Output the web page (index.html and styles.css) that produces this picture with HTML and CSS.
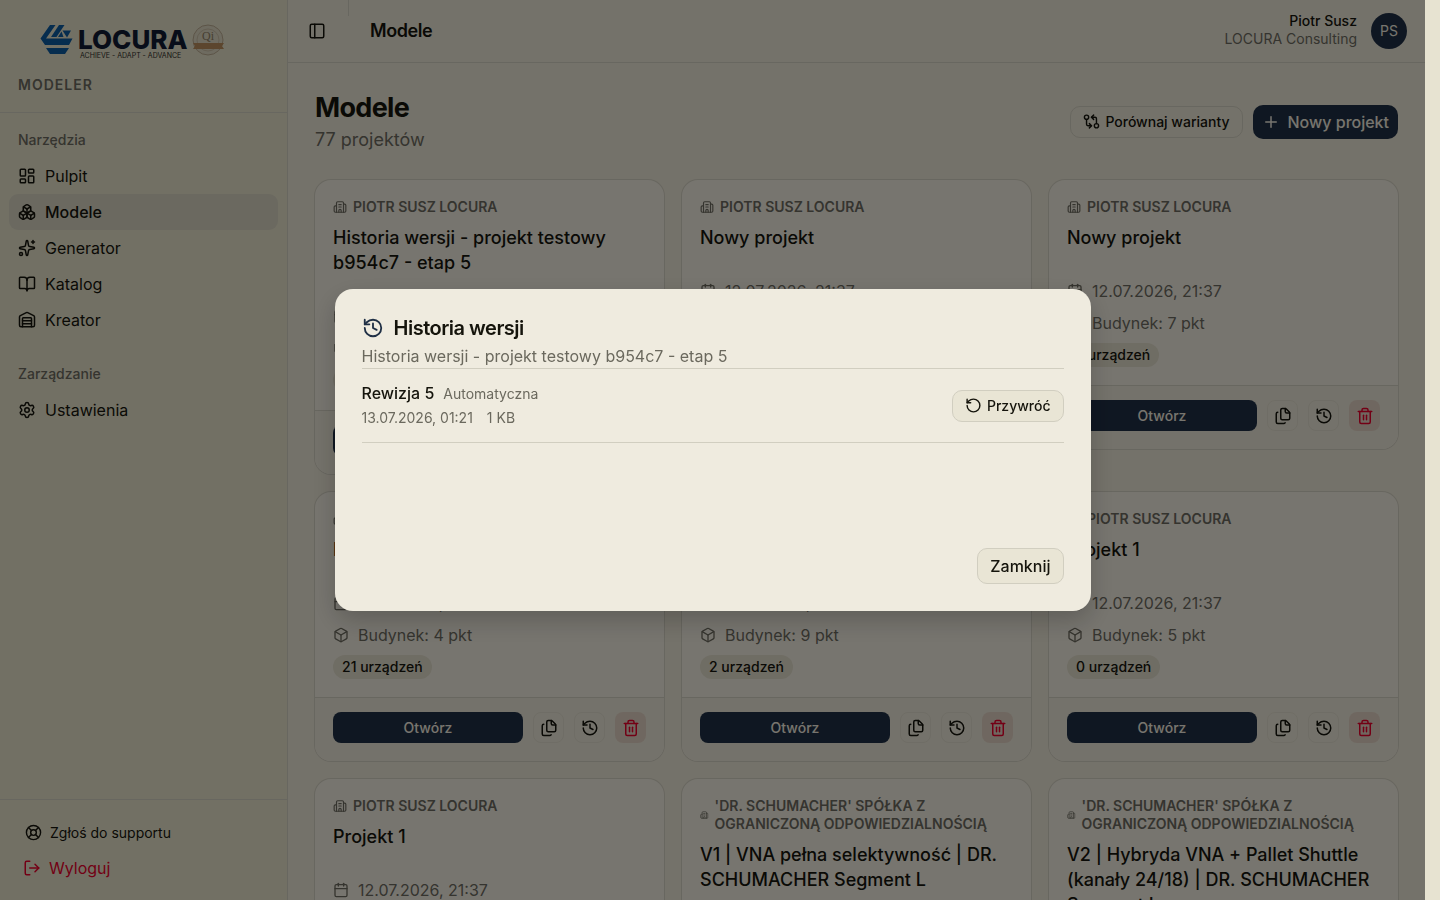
FILE: index.html
```html
<!DOCTYPE html>
<html lang="pl">
<head>
    <meta charset="UTF-8">
    <meta name="viewport" content="width=device-width, initial-scale=1.0">
    <title>Modele - LOCURA Modeler</title>
    <link rel="stylesheet" href="styles.css">
</head>
<body>
    <!-- Icon set -->
    <svg class="sprite" aria-hidden="true">
        <symbol id="i-dashboard" viewBox="0 0 24 24"><rect width="7" height="9" x="3" y="3" rx="1"/><rect width="7" height="5" x="14" y="3" rx="1"/><rect width="7" height="9" x="14" y="12" rx="1"/><rect width="7" height="5" x="3" y="16" rx="1"/></symbol>
        <symbol id="i-boxes" viewBox="0 0 24 24"><path d="M2.97 12.92A2 2 0 0 0 2 14.63v3.24a2 2 0 0 0 .97 1.71l3 1.8a2 2 0 0 0 2.06 0L12 19v-5.5l-5-3-4.03 2.42Z"/><path d="m7 16.5-4.74-2.85"/><path d="m7 16.5 5-3"/><path d="M7 16.5v5.17"/><path d="M12 13.5V19l3.97 2.38a2 2 0 0 0 2.06 0l3-1.8a2 2 0 0 0 .97-1.71v-3.24a2 2 0 0 0-.97-1.71L17 10.5l-5 3Z"/><path d="m17 16.5-5-3"/><path d="m17 16.5 4.74-2.85"/><path d="M17 16.5v5.17"/><path d="M7.97 4.42A2 2 0 0 0 7 6.13v4.37l5 3 5-3V6.13a2 2 0 0 0-.97-1.71l-3-1.8a2 2 0 0 0-2.06 0l-3 1.8Z"/><path d="M12 8 7.26 5.15"/><path d="m12 8 4.74-2.85"/><path d="M12 13.5V8"/></symbol>
        <symbol id="i-sparkles" viewBox="0 0 24 24"><path d="M11.017 2.814a1 1 0 0 1 1.966 0l1.051 5.558a2 2 0 0 0 1.594 1.594l5.558 1.051a1 1 0 0 1 0 1.966l-5.558 1.051a2 2 0 0 0-1.594 1.594l-1.051 5.558a1 1 0 0 1-1.966 0l-1.051-5.558a2 2 0 0 0-1.594-1.594l-5.558-1.051a1 1 0 0 1 0-1.966l5.558-1.051a2 2 0 0 0 1.594-1.594z"/><path d="M20 2v4"/><path d="M22 4h-4"/><circle cx="4" cy="20" r="2"/></symbol>
        <symbol id="i-book" viewBox="0 0 24 24"><path d="M12 7v14"/><path d="M3 18a1 1 0 0 1-1-1V4a1 1 0 0 1 1-1h5a4 4 0 0 1 4 4 4 4 0 0 1 4-4h5a1 1 0 0 1 1 1v13a1 1 0 0 1-1 1h-6a3 3 0 0 0-3 3 3 3 0 0 0-3-3z"/></symbol>
        <symbol id="i-warehouse" viewBox="0 0 24 24"><path d="M18 21V10a1 1 0 0 0-1-1H7a1 1 0 0 0-1 1v11"/><path d="M22 19a2 2 0 0 1-2 2H4a2 2 0 0 1-2-2V8a2 2 0 0 1 1.132-1.803l7.95-3.974a2 2 0 0 1 1.837 0l7.948 3.974A2 2 0 0 1 22 8z"/><path d="M6 13h12"/><path d="M6 17h12"/></symbol>
        <symbol id="i-settings" viewBox="0 0 24 24"><path d="M9.671 4.136a2.34 2.34 0 0 1 4.659 0 2.34 2.34 0 0 0 3.319 1.915 2.34 2.34 0 0 1 2.33 4.033 2.34 2.34 0 0 0 0 3.831 2.34 2.34 0 0 1-2.33 4.033 2.34 2.34 0 0 0-3.319 1.915 2.34 2.34 0 0 1-4.659 0 2.34 2.34 0 0 0-3.32-1.915 2.34 2.34 0 0 1-2.33-4.033 2.34 2.34 0 0 0 0-3.831A2.34 2.34 0 0 1 6.35 6.051a2.34 2.34 0 0 0 3.319-1.915"/><circle cx="12" cy="12" r="3"/></symbol>
        <symbol id="i-support" viewBox="0 0 24 24"><circle cx="12" cy="12" r="10"/><path d="m4.93 4.93 4.24 4.24"/><path d="m14.83 9.17 4.24-4.24"/><path d="m14.83 14.83 4.24 4.24"/><path d="m9.17 14.83-4.24 4.24"/><circle cx="12" cy="12" r="4"/></symbol>
        <symbol id="i-logout" viewBox="0 0 24 24"><path d="m16 17 5-5-5-5"/><path d="M21 12H9"/><path d="M9 21H5a2 2 0 0 1-2-2V5a2 2 0 0 1 2-2h4"/></symbol>
        <symbol id="i-panel" viewBox="0 0 24 24"><rect width="18" height="18" x="3" y="3" rx="2"/><path d="M9 3v18"/></symbol>
        <symbol id="i-compare" viewBox="0 0 24 24"><circle cx="5" cy="6" r="3"/><path d="M12 6h5a2 2 0 0 1 2 2v7"/><path d="m15 9-3-3 3-3"/><circle cx="19" cy="18" r="3"/><path d="M12 18H7a2 2 0 0 1-2-2V9"/><path d="m9 15 3 3-3 3"/></symbol>
        <symbol id="i-plus" viewBox="0 0 24 24"><path d="M5 12h14"/><path d="M12 5v14"/></symbol>
        <symbol id="i-building" viewBox="0 0 24 24"><path d="M10 12h4"/><path d="M10 8h4"/><path d="M14 21v-3a2 2 0 0 0-4 0v3"/><path d="M6 10H4a2 2 0 0 0-2 2v7a2 2 0 0 0 2 2h16a2 2 0 0 0 2-2V9a2 2 0 0 0-2-2h-2"/><path d="M6 21V5a2 2 0 0 1 2-2h8a2 2 0 0 1 2 2v16"/></symbol>
        <symbol id="i-calendar" viewBox="0 0 24 24"><path d="M8 2v4"/><path d="M16 2v4"/><rect width="18" height="18" x="3" y="4" rx="2"/><path d="M3 10h18"/></symbol>
        <symbol id="i-box" viewBox="0 0 24 24"><path d="M21 8a2 2 0 0 0-1-1.73l-7-4a2 2 0 0 0-2 0l-7 4A2 2 0 0 0 3 8v8a2 2 0 0 0 1 1.73l7 4a2 2 0 0 0 2 0l7-4A2 2 0 0 0 21 16Z"/><path d="m3.3 7 8.7 5 8.7-5"/><path d="M12 22V12"/></symbol>
        <symbol id="i-files" viewBox="0 0 24 24"><path d="M15 2a2 2 0 0 1 1.414.586l4 4A2 2 0 0 1 21 8v7a2 2 0 0 1-2 2h-8a2 2 0 0 1-2-2V4a2 2 0 0 1 2-2z"/><path d="M15 2v4a2 2 0 0 0 2 2h4"/><path d="M5 7a2 2 0 0 0-2 2v11a2 2 0 0 0 2 2h8a2 2 0 0 0 1.732-1"/></symbol>
        <symbol id="i-history" viewBox="0 0 24 24"><path d="M3 12a9 9 0 1 0 9-9 9.75 9.75 0 0 0-6.74 2.74L3 8"/><path d="M3 3v5h5"/><path d="M12 7v5l4 2"/></symbol>
        <symbol id="i-trash" viewBox="0 0 24 24"><path d="M10 11v6"/><path d="M14 11v6"/><path d="M19 6v14a2 2 0 0 1-2 2H7a2 2 0 0 1-2-2V6"/><path d="M3 6h18"/><path d="M8 6V4a2 2 0 0 1 2-2h4a2 2 0 0 1 2 2v2"/></symbol>
        <symbol id="i-restore" viewBox="0 0 24 24"><path d="M3 12a9 9 0 1 0 9-9 9.75 9.75 0 0 0-6.74 2.74L3 8"/><path d="M3 3v5h5"/></symbol>
    </svg>

    <div class="app">
        <aside class="sidebar">
            <div class="sidebar-header">
                <svg class="logo" width="188" height="40" viewBox="0 0 188 40" role="img" aria-label="LOCURA">
                    <g fill="#0d5a9e">
                        <path d="M13 3h5.500L9 16.500h26.500L32 23H8L3.500 16.500z"/>
                        <path d="M22 3h5.500l-8 12H14z"/>
                        <path d="M24.500 9.500l2 5.500h-5.500z"/>
                        <path d="M25.500 8.500H34L30 15.500z"/>
                        <path d="M9 26h23l-4 6H13z"/>
                    </g>
                    <text class="logo-name" x="41" y="27">LOCURA</text>
                    <text class="logo-tag" x="43" y="36">ACHIEVE - ADAPT - ADVANCE</text>
                    <circle cx="171" cy="18" r="15" fill="#dcd6c0" stroke="#b9a98f"/>
                    <circle cx="171" cy="18" r="11" fill="none" stroke="#c8bca4"/>
                    <text class="logo-seal" x="171" y="18">Qi</text>
                    <path d="M156 21h31l-2 3 2 3h-31l2-3z" fill="#b98d5c"/>
                </svg>
                <span class="product">MODELER</span>
            </div>

            <nav class="nav">
                <div class="nav-group">
                    <div class="nav-label">Narzędzia</div>
                    <a class="nav-item" href="#"><svg class="icon"><use href="#i-dashboard"/></svg>Pulpit</a>
                    <a class="nav-item active" href="#"><svg class="icon"><use href="#i-boxes"/></svg>Modele</a>
                    <a class="nav-item" href="#"><svg class="icon"><use href="#i-sparkles"/></svg>Generator</a>
                    <a class="nav-item" href="#"><svg class="icon"><use href="#i-book"/></svg>Katalog</a>
                    <a class="nav-item" href="#"><svg class="icon"><use href="#i-warehouse"/></svg>Kreator</a>
                </div>
                <div class="nav-group">
                    <div class="nav-label">Zarządzanie</div>
                    <a class="nav-item" href="#"><svg class="icon"><use href="#i-settings"/></svg>Ustawienia</a>
                </div>
            </nav>

            <div class="sidebar-footer">
                <button class="support" type="button"><svg class="icon"><use href="#i-support"/></svg>Zgłoś do supportu</button>
                <button class="logout" type="button"><svg class="icon"><use href="#i-logout"/></svg>Wyloguj</button>
            </div>
        </aside>

        <div class="main">
            <header class="topbar">
                <button class="toggle" type="button" aria-label="Przełącz panel"><svg class="icon"><use href="#i-panel"/></svg></button>
                <span class="divider"></span>
                <span class="topbar-title">Modele</span>
                <div class="user">
                    <span class="user-name">Piotr Susz</span>
                    <span class="user-org">LOCURA Consulting</span>
                </div>
                <span class="avatar">PS</span>
            </header>

            <main class="content">
                <div class="page-head">
                    <div>
                        <h1>Modele</h1>
                        <p class="count">77 projektów</p>
                    </div>
                    <div class="actions">
                        <button class="btn btn-small" type="button"><svg class="icon"><use href="#i-compare"/></svg>Porównaj warianty</button>
                        <button class="btn btn-primary" type="button"><svg class="icon"><use href="#i-plus"/></svg>Nowy projekt</button>
                    </div>
                </div>

                <div class="grid">
                    <article class="card">
                        <div class="card-body">
                            <div class="client"><svg class="icon"><use href="#i-building"/></svg><span>PIOTR SUSZ LOCURA</span></div>
                            <h2>Historia wersji - projekt testowy b954c7 - etap 5</h2>
                            <div class="meta"><svg class="icon"><use href="#i-calendar"/></svg>13.07.2026, 01:21</div>
                            <div class="meta"><svg class="icon"><use href="#i-box"/></svg>Budynek: 4 pkt</div>
                            <span class="pill">0 urządzeń</span>
                        </div>
                        <div class="card-footer">
                            <button class="open" type="button">Otwórz</button>
                            <button class="tool" type="button" aria-label="Duplikuj"><svg class="icon"><use href="#i-files"/></svg></button>
                            <button class="tool" type="button" aria-label="Historia"><svg class="icon"><use href="#i-history"/></svg></button>
                            <button class="tool danger" type="button" aria-label="Usuń"><svg class="icon"><use href="#i-trash"/></svg></button>
                        </div>
                    </article>
                    <article class="card">
                        <div class="card-body">
                            <div class="client"><svg class="icon"><use href="#i-building"/></svg><span>PIOTR SUSZ LOCURA</span></div>
                            <h2>Nowy projekt</h2>
                            <div class="meta"><svg class="icon"><use href="#i-calendar"/></svg>12.07.2026, 21:37</div>
                            <div class="meta"><svg class="icon"><use href="#i-box"/></svg>Budynek: 4 pkt</div>
                            <span class="pill">0 urządzeń</span>
                        </div>
                        <div class="card-footer">
                            <button class="open" type="button">Otwórz</button>
                            <button class="tool" type="button" aria-label="Duplikuj"><svg class="icon"><use href="#i-files"/></svg></button>
                            <button class="tool" type="button" aria-label="Historia"><svg class="icon"><use href="#i-history"/></svg></button>
                            <button class="tool danger" type="button" aria-label="Usuń"><svg class="icon"><use href="#i-trash"/></svg></button>
                        </div>
                    </article>
                    <article class="card">
                        <div class="card-body">
                            <div class="client"><svg class="icon"><use href="#i-building"/></svg><span>PIOTR SUSZ LOCURA</span></div>
                            <h2>Nowy projekt</h2>
                            <div class="meta"><svg class="icon"><use href="#i-calendar"/></svg>12.07.2026, 21:37</div>
                            <div class="meta"><svg class="icon"><use href="#i-box"/></svg>Budynek: 7 pkt</div>
                            <span class="pill">7 urządzeń</span>
                        </div>
                        <div class="card-footer">
                            <button class="open" type="button">Otwórz</button>
                            <button class="tool" type="button" aria-label="Duplikuj"><svg class="icon"><use href="#i-files"/></svg></button>
                            <button class="tool" type="button" aria-label="Historia"><svg class="icon"><use href="#i-history"/></svg></button>
                            <button class="tool danger" type="button" aria-label="Usuń"><svg class="icon"><use href="#i-trash"/></svg></button>
                        </div>
                    </article>

                    <article class="card">
                        <div class="card-body">
                            <div class="client"><svg class="icon"><use href="#i-building"/></svg><span>PIOTR SUSZ LOCURA</span></div>
                            <h2>Projekt 1</h2>
                            <div class="meta"><svg class="icon"><use href="#i-calendar"/></svg>12.07.2026, 21:37</div>
                            <div class="meta"><svg class="icon"><use href="#i-box"/></svg>Budynek: 4 pkt</div>
                            <span class="pill">21 urządzeń</span>
                        </div>
                        <div class="card-footer">
                            <button class="open" type="button">Otwórz</button>
                            <button class="tool" type="button" aria-label="Duplikuj"><svg class="icon"><use href="#i-files"/></svg></button>
                            <button class="tool" type="button" aria-label="Historia"><svg class="icon"><use href="#i-history"/></svg></button>
                            <button class="tool danger" type="button" aria-label="Usuń"><svg class="icon"><use href="#i-trash"/></svg></button>
                        </div>
                    </article>
                    <article class="card">
                        <div class="card-body">
                            <div class="client"><svg class="icon"><use href="#i-building"/></svg><span>PIOTR SUSZ LOCURA</span></div>
                            <h2>Projekt 1</h2>
                            <div class="meta"><svg class="icon"><use href="#i-calendar"/></svg>12.07.2026, 21:37</div>
                            <div class="meta"><svg class="icon"><use href="#i-box"/></svg>Budynek: 9 pkt</div>
                            <span class="pill">2 urządzeń</span>
                        </div>
                        <div class="card-footer">
                            <button class="open" type="button">Otwórz</button>
                            <button class="tool" type="button" aria-label="Duplikuj"><svg class="icon"><use href="#i-files"/></svg></button>
                            <button class="tool" type="button" aria-label="Historia"><svg class="icon"><use href="#i-history"/></svg></button>
                            <button class="tool danger" type="button" aria-label="Usuń"><svg class="icon"><use href="#i-trash"/></svg></button>
                        </div>
                    </article>
                    <article class="card">
                        <div class="card-body">
                            <div class="client"><svg class="icon"><use href="#i-building"/></svg><span>PIOTR SUSZ LOCURA</span></div>
                            <h2>Projekt 1</h2>
                            <div class="meta"><svg class="icon"><use href="#i-calendar"/></svg>12.07.2026, 21:37</div>
                            <div class="meta"><svg class="icon"><use href="#i-box"/></svg>Budynek: 5 pkt</div>
                            <span class="pill">0 urządzeń</span>
                        </div>
                        <div class="card-footer">
                            <button class="open" type="button">Otwórz</button>
                            <button class="tool" type="button" aria-label="Duplikuj"><svg class="icon"><use href="#i-files"/></svg></button>
                            <button class="tool" type="button" aria-label="Historia"><svg class="icon"><use href="#i-history"/></svg></button>
                            <button class="tool danger" type="button" aria-label="Usuń"><svg class="icon"><use href="#i-trash"/></svg></button>
                        </div>
                    </article>

                    <article class="card">
                        <div class="card-body">
                            <div class="client"><svg class="icon"><use href="#i-building"/></svg><span>PIOTR SUSZ LOCURA</span></div>
                            <h2>Projekt 1</h2>
                            <div class="meta"><svg class="icon"><use href="#i-calendar"/></svg>12.07.2026, 21:37</div>
                        </div>
                    </article>
                    <article class="card">
                        <div class="card-body">
                            <div class="client"><svg class="icon"><use href="#i-building"/></svg><span>'DR. SCHUMACHER' SPÓŁKA Z OGRANICZONĄ ODPOWIEDZIALNOŚCIĄ</span></div>
                            <h2>V1 | VNA pełna selektywność | DR. SCHUMACHER Segment L</h2>
                        </div>
                    </article>
                    <article class="card">
                        <div class="card-body">
                            <div class="client"><svg class="icon"><use href="#i-building"/></svg><span>'DR. SCHUMACHER' SPÓŁKA Z OGRANICZONĄ ODPOWIEDZIALNOŚCIĄ</span></div>
                            <h2>V2 | Hybryda VNA + Pallet Shuttle (kanały 24/18) | DR. SCHUMACHER Segment L</h2>
                        </div>
                    </article>
                </div>
            </main>
        </div>
    </div>

    <div class="overlay">
        <div class="modal" role="dialog" aria-modal="true" aria-labelledby="modalTitle">
            <h2 class="modal-title" id="modalTitle"><svg class="icon"><use href="#i-history"/></svg>Historia wersji</h2>
            <p class="modal-sub">Historia wersji - projekt testowy b954c7 - etap 5</p>
            <ul class="revisions">
                <li>
                    <div>
                        <div class="rev-line"><strong>Rewizja 5</strong><span>Automatyczna</span></div>
                        <div class="rev-info"><span>13.07.2026, 01:21</span><span>1 KB</span></div>
                    </div>
                    <button class="btn btn-small" type="button"><svg class="icon"><use href="#i-restore"/></svg>Przywróć</button>
                </li>
            </ul>
            <div class="modal-footer">
                <button class="btn" type="button">Zamknij</button>
            </div>
        </div>
    </div>
</body>
</html>
```
FILE: styles.css
```css
* {
    margin: 0;
    padding: 0;
    box-sizing: border-box;
}

:root {
    --page: #e9e4d4;
    --sidebar: #e5e1c9;
    --card: #efebdf;
    --border: #d1cec0;
    --text: #15140c;
    --muted: #6b695e;
    --navy: #1f2f45;
    --red: #e6002a;
}

body {
    font-family: Inter, sans-serif;
    font-size: 16px;
    line-height: 24px;
    color: var(--text);
    background: #e7e3d1;
    height: 100vh;
    overflow: hidden;
    padding-right: 15px;
}

button {
    font: inherit;
    color: inherit;
    background: none;
    border: none;
    cursor: pointer;
}

a {
    color: inherit;
    text-decoration: none;
}

.sprite {
    display: none;
}

.icon {
    width: 18px;
    height: 18px;
    fill: none;
    stroke: currentColor;
    stroke-width: 2;
    stroke-linecap: round;
    stroke-linejoin: round;
}

.app {
    display: flex;
    height: 100vh;
    overflow: hidden;
}

/* Sidebar */
.sidebar {
    width: 288px;
    flex-shrink: 0;
    display: flex;
    flex-direction: column;
    background: var(--sidebar);
    border-right: 1px solid var(--border);
}

.sidebar-header {
    padding: 22px 18px 18px;
    border-bottom: 1px solid var(--border);
}

.logo {
    display: block;
    margin: 0 auto 14px 19px;
}

.logo-name {
    font-size: 26px;
    font-weight: 800;
    fill: #101a33;
}

.logo-tag {
    font-size: 7px;
    fill: #2e2d28;
}

.logo-seal {
    font-family: "Liberation Serif", serif;
    font-size: 12px;
    text-anchor: middle;
    fill: #8d7d63;
}

.product {
    display: block;
    font-size: 14px;
    font-weight: 600;
    line-height: 18px;
    letter-spacing: 1px;
    color: var(--muted);
}

.nav {
    flex: 1;
}

.nav-group {
    padding: 9px;
}

.nav-label {
    padding: 0 9px;
    font-size: 14px;
    font-weight: 500;
    line-height: 36px;
    color: var(--muted);
}

.nav-item {
    display: flex;
    align-items: center;
    gap: 9px;
    height: 36px;
    padding: 0 9px 1px;
    border-radius: 9px;
}

.nav-item.active {
    background: #d6d3c1;
    font-weight: 500;
}

.sidebar-footer {
    display: flex;
    flex-direction: column;
    align-items: flex-start;
    padding: 15px 18px;
    border-top: 1px solid var(--border);
}

.support,
.logout {
    display: flex;
    align-items: center;
    gap: 8px;
    height: 35px;
    padding: 0 7px;
}

.support {
    font-size: 14px;
}

.support .icon {
    width: 17px;
    height: 17px;
}

.logout {
    padding: 0 5px;
    color: var(--red);
}

/* Top bar */
.main {
    flex: 1;
    min-width: 0;
    background: var(--page);
}

.topbar {
    display: flex;
    align-items: center;
    height: 63px;
    padding: 0 18px;
    border-bottom: 1px solid var(--border);
}

.toggle {
    display: flex;
    padding: 2px;
}

.divider {
    align-self: flex-start;
    width: 1px;
    height: 16px;
    margin: 0 21px 0 20px;
    background: var(--border);
}

.topbar-title {
    flex: 1;
    font-size: 18px;
    font-weight: 600;
    letter-spacing: -0.025em;
}

.user {
    display: flex;
    flex-direction: column;
    margin-right: 14px;
    padding-bottom: 2px;
    font-size: 14px;
    line-height: 18px;
    text-align: right;
}

.user-name {
    font-weight: 500;
}

.user-org {
    color: var(--muted);
}

.avatar {
    width: 36px;
    border-radius: 50%;
    background: var(--navy);
    color: #efebdf;
    font-size: 14px;
    line-height: 36px;
    text-align: center;
}

/* Page */
.content {
    padding: 27px;
}

.page-head {
    display: flex;
    justify-content: space-between;
    align-items: center;
    margin-bottom: 27px;
}

h1 {
    font-size: 27px;
    font-weight: 700;
    line-height: 36px;
    letter-spacing: -0.025em;
}

.count {
    font-size: 18px;
    line-height: 27px;
    color: var(--muted);
}

.actions {
    display: flex;
    align-items: center;
    gap: 10px;
}

.btn {
    display: flex;
    align-items: center;
    gap: 8px;
    height: 36px;
    padding: 0 12px;
    border: 1px solid var(--border);
    border-radius: 10px;
    background: #e9e5d5;
    font-weight: 500;
}

.btn-small {
    gap: 5px;
    height: 32px;
    font-size: 14px;
}

.btn-small .icon {
    width: 17px;
    height: 17px;
}

.btn-primary {
    height: 34px;
    padding: 0 9px;
    border: none;
    background: var(--navy);
    color: #efebdf;
}

.grid {
    display: grid;
    grid-template-columns: repeat(3, 1fr);
    align-items: start;
    gap: 18px;
}

.card {
    overflow: hidden;
    border-radius: 16px;
    background: var(--card);
    box-shadow: 0 0 0 1px var(--border);
}

.card-body {
    padding: 18px;
}

.client {
    display: flex;
    align-items: center;
    gap: 6px;
    margin-bottom: 9px;
    font-size: 14px;
    font-weight: 600;
    line-height: 18px;
    color: var(--muted);
}

.client .icon {
    width: 14px;
    height: 14px;
}

.card h2 {
    margin-bottom: 29px;
    font-size: 18px;
    font-weight: 500;
    line-height: 25px;
}

.meta {
    display: flex;
    align-items: center;
    gap: 9px;
    margin-bottom: 8px;
    color: var(--muted);
}

.meta .icon {
    width: 16px;
    height: 16px;
}

.pill {
    display: table;
    padding: 0 9px;
    border-radius: 12px;
    background: #dfdac8;
    font-size: 14px;
    font-weight: 500;
    line-height: 24px;
}

.card-footer {
    display: flex;
    gap: 10px;
    padding: 14px 18px 18px;
    border-top: 1px solid var(--border);
    background: #e9e5d6;
}

.open {
    flex: 1;
    border-radius: 8px;
    background: var(--navy);
    color: #efebdf;
    font-size: 14px;
    font-weight: 500;
}

.tool {
    display: flex;
    align-items: center;
    justify-content: center;
    width: 31px;
    height: 31px;
    border: 1px solid #dfdbcc;
    border-radius: 8px;
}

.tool.danger {
    border: none;
    background: #dfcfc1;
    color: var(--red);
}

/* Version history dialog */
.overlay {
    position: fixed;
    inset: 0 15px 0 0;
    display: flex;
    align-items: center;
    justify-content: center;
    background: rgba(0, 0, 0, 0.5);
}

.modal {
    width: 100%;
    max-width: 756px;
    padding: 27px;
    border-radius: 18px;
    background: var(--card);
    box-shadow: 0 10px 24px rgba(0, 0, 0, 0.2);
}

.modal-title {
    display: flex;
    align-items: center;
    gap: 10px;
    font-size: 20px;
    font-weight: 600;
    line-height: 24px;
    letter-spacing: -0.025em;
}

.modal-title .icon {
    width: 22px;
    height: 22px;
    color: var(--navy);
}

.modal-sub {
    margin-top: 4px;
    color: var(--muted);
}

.revisions {
    min-height: 162px;
    margin-bottom: 18px;
    border-top: 1px solid var(--border);
    list-style: none;
}

.revisions li {
    display: flex;
    align-items: center;
    justify-content: space-between;
    padding: 12px 0;
    border-bottom: 1px solid var(--border);
}

.rev-line,
.rev-info {
    display: flex;
    align-items: baseline;
    gap: 9px;
    font-size: 14px;
    color: var(--muted);
}

.rev-info {
    gap: 14px;
}

.rev-line strong {
    font-size: 16px;
    font-weight: 500;
    color: var(--text);
}

.modal-footer {
    display: flex;
    justify-content: flex-end;
}
```
